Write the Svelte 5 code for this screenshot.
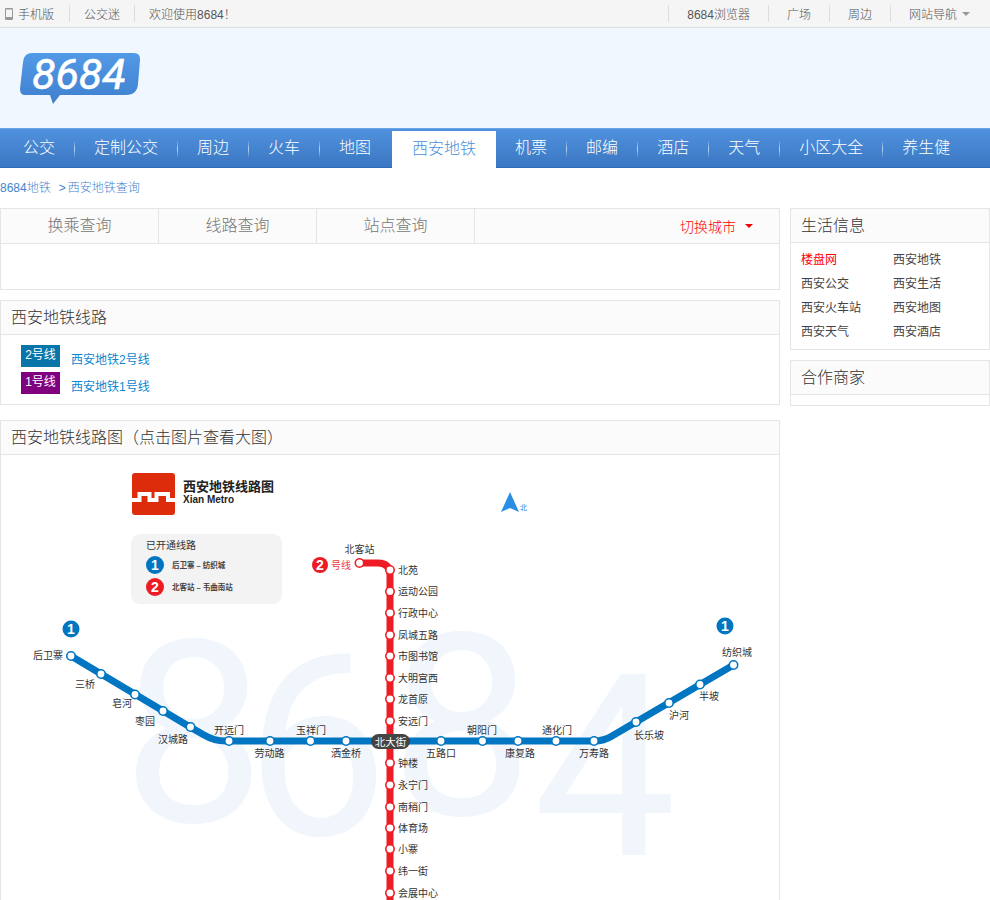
<script>
  const leftTop = ['公交迷', '欢迎使用8684！'];
  const rightTop = ['8684浏览器', '广场', '周边'];
  const navA = ['公交', '定制公交', '周边', '火车', '地图'];
  const navB = ['机票', '邮编', '酒店', '天气', '小区大全', '养生健'];
  const tabs = ['换乘查询', '线路查询', '站点查询'];
  const lines = [
    { tag: '2号线', name: '西安地铁2号线', color: '#0a75a8' },
    { tag: '1号线', name: '西安地铁1号线', color: '#800080' }
  ];
  const life = ['楼盘网', '西安地铁', '西安公交', '西安生活', '西安火车站', '西安地图', '西安天气', '西安酒店'];

  const ghost = [['8', 122, 822], ['6', 245, 835], ['8', 390, 815], ['4', 533, 855]];
  const red = [
    ['北苑', 570], ['运动公园', 591.5], ['行政中心', 613], ['凤城五路', 635], ['市图书馆', 656],
    ['大明宫西', 678], ['龙首原', 699], ['安远门', 721], ['钟楼', 763], ['永宁门', 785],
    ['南稍门', 807], ['体育场', 828], ['小寨', 849], ['纬一街', 871], ['会展中心', 893]
  ];
  const blue = [[71, 656], [101, 674], [135, 694.5], [163, 711], [190.5, 727], [229, 741], [270, 741], [310.5, 741], [346, 741], [441, 741], [482.5, 741], [518, 741], [556, 741], [594, 741], [636, 722], [669, 703], [700, 684.5], [733.5, 665]];
  const blueLabels = [
    ['后卫寨', 48, 655], ['三桥', 85, 684], ['皂河', 122, 703], ['枣园', 145, 721.5], ['汉城路', 173, 739.5],
    ['开远门', 229, 730], ['劳动路', 269.5, 753], ['玉祥门', 311, 730], ['洒金桥', 346, 753], ['五路口', 441, 753],
    ['朝阳门', 482, 730], ['康复路', 520, 753], ['通化门', 557, 730], ['万寿路', 594, 753], ['长乐坡', 649, 735],
    ['沪河', 679, 715], ['半坡', 709, 696], ['纺织城', 737, 652]
  ];
</script>

<div class="page">
  <div class="topbar">
    <div class="group">
      <span class="item first">
        <svg class="phone" width="8" height="12" viewBox="0 0 8 12"><rect width="8" height="12" rx="1" fill="#999" /><rect x="1" y="1.5" width="6" height="7.5" fill="#f5f5f5" /></svg>
        手机版
      </span>
      {#each leftTop as t}<span class="item">{t}</span>{/each}
    </div>
    <div class="group">
      {#each rightTop as t}<span class="item sep">{t}</span>{/each}
      <span class="item sep last">网站导航<i class="caret"></i></span>
    </div>
  </div>

  <header class="brand">
    <svg class="logo" width="122" height="52" viewBox="0 0 122 52">
      <defs>
        <linearGradient id="lg" x1="0" y1="0" x2="0" y2="1"><stop offset="0" stop-color="#5299e6" /><stop offset="1" stop-color="#3f80cd" /></linearGradient>
      </defs>
      <path d="M12 0H114Q120.500 0 120 7L118 31Q117 42 106 42H40L33 51 30 42H5Q0 42 0 36L3 9Q4 0 12 0Z" fill="url(#lg)" />
      <text x="12" y="36" class="logotext">8684</text>
    </svg>
  </header>

  <nav class="nav">
    {#each navA as t, i}
      <a class="navitem" class:nosep={i === navA.length - 1}>{t}</a>
    {/each}
    <a class="navitem active">西安地铁</a>
    {#each navB as t, i}
      <a class="navitem" class:nosep={i === navB.length - 1}>{t}</a>
    {/each}
  </nav>

  <div class="crumb">8684地铁<span class="gt">&gt;</span>西安地铁查询</div>

  <div class="content">
    <main class="left">
      <section class="panel query">
        <div class="tabs">
          {#each tabs as t}<span class="tab">{t}</span>{/each}
          <span class="city">切换城市<i class="redcaret"></i></span>
        </div>
        <div class="querybody"></div>
      </section>

      <section class="panel">
        <h2>西安地铁线路</h2>
        <div class="linelist">
          {#each lines as l}
            <div class="linerow">
              <span class="tag" style:background={l.color}>{l.tag}</span>
              <a class="linename">{l.name}</a>
            </div>
          {/each}
        </div>
      </section>

      <section class="panel mapwrap">
        <h2>西安地铁线路图（点击图片查看大图）</h2>
        <svg class="map" width="778" height="500" viewBox="1 455 778 500">
          <g class="ghost">
            {#each ghost as [d, x, y]}<text x={x} y={y}>{d}</text>{/each}
          </g>

          <rect x="132" y="473" width="43" height="42" rx="3" fill="#dc2c0c" />
          <path d="M132 500H139.500V494H149.500V500H156.500V494H168V500H175" fill="none" stroke="#fff" stroke-width="4" />
          <text x="183" y="491" class="mtitle">西安地铁线路图</text>
          <text x="183" y="503" class="men">Xian Metro</text>

          <path d="M510 492L501 512 510 508 519 512Z" fill="#2a8fe4" />
          <text x="520" y="510" class="north">北</text>

          <rect x="131" y="534" width="151" height="70" rx="9" fill="#f3f3f3" />
          <text x="146" y="549" class="st">已开通线路</text>
          <circle cx="155" cy="565" r="9" fill="#0075c1" />
          <text x="155" y="570" class="num">1</text>
          <text x="172" y="568" class="mini">后卫寨 – 纺织城</text>
          <circle cx="155" cy="587" r="9" fill="#ed1c24" />
          <text x="155" y="592" class="num">2</text>
          <text x="172" y="590" class="mini">北客站 – 韦曲南站</text>

          <circle cx="71" cy="629" r="8.500" fill="#0075c1" />
          <text x="71" y="634" class="num">1</text>
          <circle cx="725" cy="626" r="8.500" fill="#0075c1" />
          <text x="725" y="631" class="num">1</text>
          <circle cx="320" cy="565" r="8" fill="#ed1c24" />
          <text x="320" y="570" class="num">2</text>
          <text x="331" y="569" class="redlabel">号线</text>

          <path d="M359 563H378Q390 563 390 575V955" fill="none" stroke="#ee1c25" stroke-width="7" />
          <path d="M71 656L190 727 204 735Q214 741 226 741H594Q604 741 612 736L733.500 665" fill="none" stroke="#0075c1" stroke-width="7" />

          {#each red as [n, y]}
            <circle cx="390" cy={y} r="4.200" fill="#fff" stroke="#ee1c25" stroke-width="1.600" />
            <text x="398" y={y + 3.500} class="st">{n}</text>
          {/each}
          <circle cx="359.500" cy="563" r="4.200" fill="#fff" stroke="#ee1c25" stroke-width="1.600" />
          <text x="359.500" y="553" class="st mid">北客站</text>

          {#each blue as [x, y]}
            <circle cx={x} cy={y} r="4.200" fill="#fff" stroke="#0075c1" stroke-width="1.600" />
          {/each}
          {#each blueLabels as [n, x, y]}
            <text x={x} y={y + 3.500} class="st mid">{n}</text>
          {/each}

          <rect x="371" y="734" width="39" height="15" rx="7.500" fill="#444" />
          <text x="390.500" y="745.500" class="hub">北大街</text>
        </svg>
      </section>
    </main>

    <aside class="right">
      <section class="panel">
        <h2>生活信息</h2>
        <div class="lifegrid">
          {#each life as t, i}<a class:hot={i === 0}>{t}</a>{/each}
        </div>
      </section>
      <section class="panel">
        <h2>合作商家</h2>
        <div class="partners"></div>
      </section>
    </aside>
  </div>
</div>

<style>
  :global(body) {
    margin: 0;
    background: #fff;
  }
  .page {
    width: 990px;
    height: 900px;
    overflow: hidden;
    font-family: "Liberation Sans", "Noto Sans CJK SC", sans-serif;
    font-size: 12px;
    font-weight: 300;
  }
  .topbar {
    height: 28px;
    box-sizing: border-box;
    border-bottom: 1px solid #ddd;
    background: #f5f5f5;
    display: flex;
    justify-content: space-between;
    color: #555;
  }
  .group {
    display: flex;
    align-items: center;
  }
  .item {
    display: flex;
    align-items: center;
    height: 17px;
    padding: 0 14px;
    border-right: 1px solid #ddd;
    white-space: nowrap;
  }
  .item:last-child {
    border-right: 0;
  }
  .item.first {
    padding: 0 15px 0 5px;
    gap: 5px;
  }
  .item.sep {
    padding: 0 18px;
    border-right: 0;
    border-left: 1px solid #ddd;
  }
  .item.last {
    padding-right: 20px;
  }
  .caret {
    width: 0;
    height: 0;
    margin-left: 5px;
    border: 4px solid transparent;
    border-top: 4px solid #999;
    border-bottom: 0;
  }
  .brand {
    height: 100px;
    background: #f0f7ff;
    padding: 25px 0 0 20px;
    box-sizing: border-box;
  }
  .logo {
    overflow: visible;
  }
  .logotext {
    font: italic 400 43px "Roboto", "Liberation Sans", sans-serif;
    fill: #fff;
    stroke: #fff;
    stroke-width: 0.6px;
  }
  .nav {
    height: 40px;
    box-sizing: border-box;
    padding-left: 4px;
    display: flex;
    border-top: 1px solid #6aa5ea;
    border-bottom: 1px solid #2a6ab8;
    background: linear-gradient(#5091dd, #3a77c2);
    font-size: 16px;
    color: #fff;
  }
  .navitem {
    position: relative;
    padding: 0 20px 0 19px;
    line-height: 37px;
    white-space: nowrap;
  }
  .navitem::after {
    content: "";
    position: absolute;
    right: 0;
    top: 11px;
    height: 18px;
    width: 1px;
    background: linear-gradient(transparent, #b9d5f4 50%, transparent);
  }
  .navitem.nosep::after,
  .navitem.active::after {
    display: none;
  }
  .navitem.active {
    margin: 2px 0 -1px 1px;
    padding: 0 20px;
    background: #fff;
    color: #4a90d9;
    line-height: 36px;
  }
  .crumb {
    height: 40px;
    line-height: 40px;
    color: #3f83d0;
  }
  .gt {
    margin: 0 2px 0 8px;
  }
  .content {
    display: flex;
    gap: 10px;
  }
  .left {
    width: 780px;
    display: flex;
    flex-direction: column;
    gap: 10px;
  }
  .right {
    width: 200px;
    display: flex;
    flex-direction: column;
    gap: 10px;
  }
  .panel {
    border: 1px solid #e5e5e5;
    box-sizing: border-box;
    background: #fff;
  }
  h2 {
    margin: 0;
    height: 34px;
    line-height: 33px;
    padding-left: 10px;
    background: #fbfbfb;
    border-bottom: 1px solid #e5e5e5;
    box-sizing: border-box;
    font-size: 16px;
    font-weight: 300;
    color: #333;
  }
  .tabs {
    height: 35px;
    box-sizing: border-box;
    display: flex;
    background: #fbfbfb;
    border-bottom: 1px solid #e5e5e5;
  }
  .tab {
    width: 158px;
    box-sizing: border-box;
    border-right: 1px solid #e5e5e5;
    text-align: center;
    font-size: 16px;
    line-height: 33px;
    color: #777;
  }
  .city {
    margin-left: auto;
    padding-right: 26px;
    display: flex;
    align-items: center;
    color: #f00;
    font-size: 14px;
  }
  .redcaret {
    width: 0;
    height: 0;
    margin-left: 9px;
    border: 4px solid transparent;
    border-top: 4px solid #e00;
    border-bottom: 0;
  }
  .querybody {
    height: 45px;
  }
  .linelist {
    padding: 10px 20px;
    height: 69px;
    box-sizing: border-box;
  }
  .linerow {
    display: flex;
    height: 27px;
  }
  .tag {
    width: 39px;
    height: 22px;
    line-height: 20px;
    text-align: center;
    color: #fff;
    font-weight: 400;
  }
  .linename {
    margin-left: 11px;
    line-height: 30px;
    color: #0a86d0;
    font-weight: 400;
  }
  .mapwrap {
    margin-top: 5px;
  }
  .map {
    display: block;
  }
  .ghost text {
    font-family: "Roboto", "Liberation Sans", sans-serif;
    font-weight: 400;
    font-size: 255px;
    fill: #f0f6fc;
  }
  .st {
    font-size: 10px;
    font-weight: 400;
    fill: #333;
  }
  .mid {
    text-anchor: middle;
  }
  .mtitle {
    font-size: 13px;
    font-weight: 700;
    fill: #222;
  }
  .men {
    font-size: 10px;
    font-weight: 700;
    fill: #222;
  }
  .north {
    font-size: 7px;
    font-weight: 400;
    fill: #2a8fe4;
  }
  .num {
    font-size: 14px;
    font-weight: 700;
    fill: #fff;
    text-anchor: middle;
  }
  .mini {
    font-size: 7.500px;
    font-weight: 700;
    fill: #444;
  }
  .redlabel {
    font-size: 10px;
    font-weight: 400;
    fill: #ed3a40;
  }
  .hub {
    font-size: 10.500px;
    font-weight: 400;
    fill: #fff;
    text-anchor: middle;
  }
  .lifegrid {
    display: grid;
    grid-template-columns: 92px 1fr;
    grid-auto-rows: 24px;
    padding: 5px 10px 5px;
    line-height: 24px;
    color: #444;
    font-weight: 400;
  }
  .hot {
    color: #f00;
  }
  .partners {
    height: 10px;
  }
</style>
